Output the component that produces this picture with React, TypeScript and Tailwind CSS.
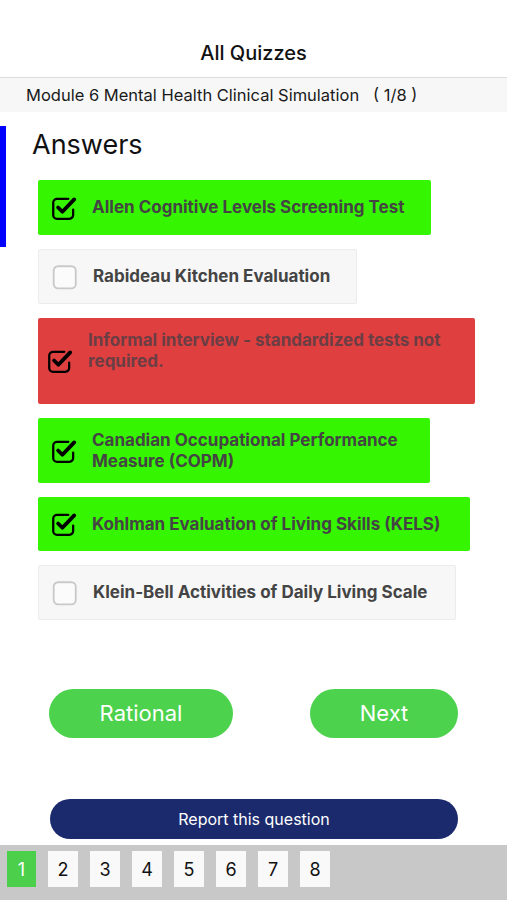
import React from "react";

const font = { fontFamily: "Inter, 'Noto Sans', 'Liberation Sans', sans-serif" };

function Checked() {
  return (
    <svg width="28" height="28" viewBox="0 0 26 26" className="shrink-0">
      <path
        d="M17 4.5 H6.5 a3.5 3.5 0 0 0 -3.5 3.5 v11.5 a3.5 3.5 0 0 0 3.5 3.5 h11.5 a3.5 3.5 0 0 0 3.5 -3.5 v-5"
        fill="none"
        stroke="#000"
        strokeWidth="2.1"
        strokeLinecap="round"
      />
      <path
        d="M7.5 12.5 L11.5 16.5 L22.5 5"
        fill="none"
        stroke="#000"
        strokeWidth="3.5"
        strokeLinecap="round"
        strokeLinejoin="round"
      />
    </svg>
  );
}

function Unchecked() {
  return (
    <svg width="28" height="28" viewBox="0 0 26 26" className="shrink-0">
      <rect x="2.5" y="3" width="20.5" height="20.5" rx="4" fill="#fbfbfb" stroke="#c9c9c9" strokeWidth="1.7" />
    </svg>
  );
}

type Opt = { text: React.ReactNode; state: "correct" | "wrong" | "none"; w: string; h: string };

export default function App() {
  const opts: Opt[] = [
    { text: "Allen Cognitive Levels Screening Test", state: "correct", w: "w-[393px]", h: "h-[55px]" },
    { text: "Rabideau Kitchen Evaluation", state: "none", w: "w-[319px]", h: "h-[55px]" },
    { text: <>Informal interview - standardized tests not<br />required.</>, state: "wrong", w: "w-[437px]", h: "h-[86px]" },
    { text: <>Canadian Occupational Performance<br />Measure (COPM)</>, state: "correct", w: "w-[392px]", h: "h-[65px]" },
    { text: "Kohlman Evaluation of Living Skills (KELS)", state: "correct", w: "w-[432px]", h: "h-[54px]" },
    { text: "Klein-Bell Activities of Daily Living Scale", state: "none", w: "w-[418px]", h: "h-[55px]" },
  ];

  return (
    <div className="w-[507px] h-[900px] bg-white flex flex-col relative overflow-hidden" style={font}>
      {/* Header */}
      <div className="h-[78px] flex items-end justify-center pb-[12px] border-b border-[#dcdcdc]">
        <span className="text-[20px] font-medium text-[#111] leading-[24px]">All Quizzes</span>
      </div>
      <div className="h-[34px] bg-[#f7f7f7] flex items-center pl-[26px]">
        <span className="text-[16.5px] text-[#1a1a1a] whitespace-pre">Module 6 Mental Health Clinical Simulation   ( 1/8 )</span>
      </div>

      {/* Content */}
      <div className="relative flex-1 flex flex-col">
        <div className="absolute left-0 top-[14px] w-[6px] h-[121px] bg-[#0000ff]" />
        <div className="pl-[32px] pt-[17px] text-[27px] leading-[32px] text-[#111]">Answers</div>
        <div className="flex flex-col gap-[14px] pl-[38px] mt-[19px]">
          {opts.map((o, i) => {
            const bg =
              o.state === "correct"
                ? "bg-[#35f500]"
                : o.state === "wrong"
                ? "bg-[#e03f3f]"
                : "bg-[#f7f7f7] border border-[#ececec]";
            if (o.state === "wrong") {
              return (
                <div key={i} className={`${bg} ${o.w} ${o.h} rounded-[2px] flex items-center pl-[8px]`}>
                  <Checked />
                  <div className="self-start pt-[12px] pl-[14px] text-[17px] font-bold leading-[21px] text-[#6a3e44] whitespace-nowrap">
                    {o.text}
                  </div>
                </div>
              );
            }
            return (
              <div key={i} className={`${bg} ${o.w} ${o.h} rounded-[2px] flex items-center pl-[12px] gap-[14px]`}>
                {o.state === "correct" ? <Checked /> : <Unchecked />}
                <div className="text-[17px] font-bold leading-[21px] text-[#444] whitespace-nowrap">{o.text}</div>
              </div>
            );
          })}
        </div>

        <div className="flex justify-between px-[49px] mt-[69px]">
          <div className="w-[184px] h-[49px] rounded-full bg-[#4cd24c] flex items-center justify-center text-white text-[22px]">
            Rational
          </div>
          <div className="w-[148px] h-[49px] rounded-full bg-[#4cd24c] flex items-center justify-center text-white text-[22px]">
            Next
          </div>
        </div>

        <div className="px-[50px] mt-[61px]">
          <div className="w-[408px] h-[40px] rounded-full bg-[#1b2a6c] flex items-center justify-center text-white text-[16px]">
            Report this question
          </div>
        </div>
      </div>

      {/* Bottom pager */}
      <div className="h-[55px] bg-[#c8c8c8] flex items-start pt-[6px] pl-[7px] gap-[12px]">
        {[1, 2, 3, 4, 5, 6, 7, 8].map((n) => (
          <div
            key={n}
            className={
              n === 1
                ? "w-[29px] h-[36px] bg-[#4cd04c] text-white flex items-center justify-center text-[18px]"
                : "w-[30px] h-[36px] bg-[#f9f9f9] text-[#111] flex items-center justify-center text-[18px]"
            }
          >
            {n}
          </div>
        ))}
      </div>
    </div>
  );
}
